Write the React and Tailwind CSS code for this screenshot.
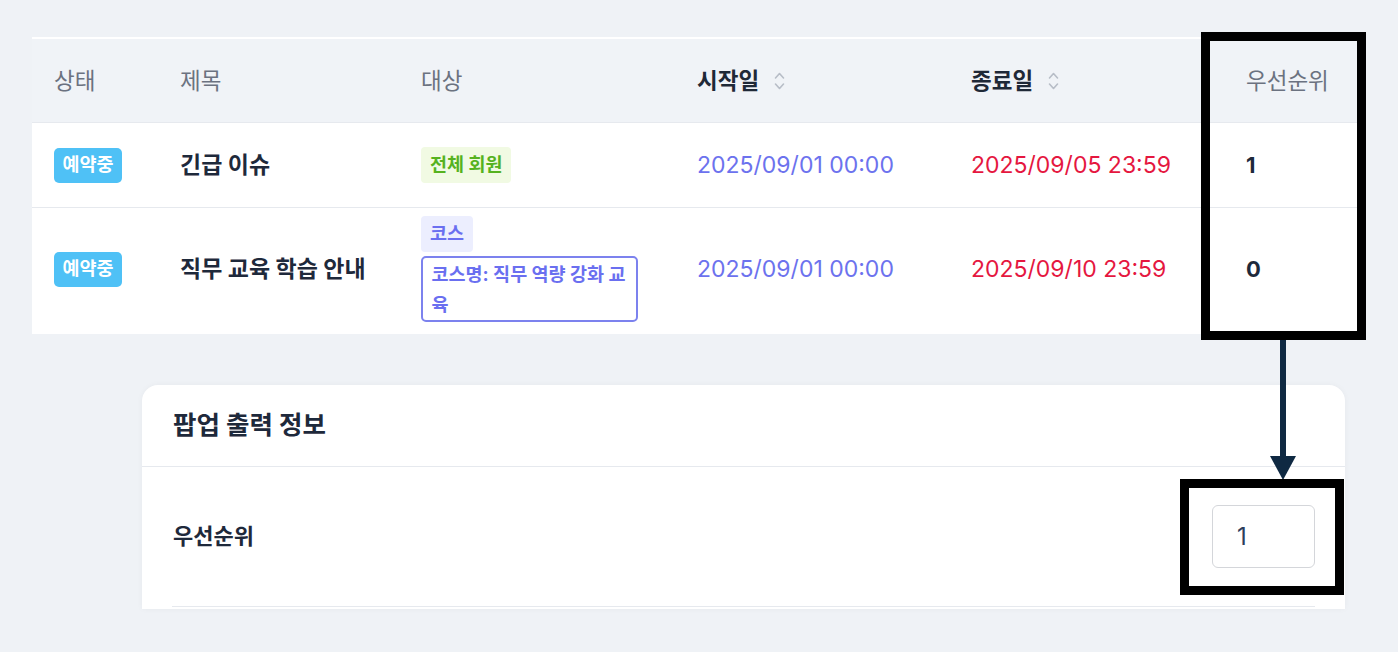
const FONT = { fontFamily: 'Inter, "Noto Sans CJK KR", "Noto Sans", sans-serif' };

function SortIcon() {
  return (
    <svg width="13" height="24" viewBox="0 0 13 24" className="ml-[14px]">
      <path d="M2.5 9 L6.5 4.5 L10.5 9" fill="none" stroke="#b7bdc7" strokeWidth="1.6" strokeLinecap="round" strokeLinejoin="round" />
      <path d="M2.5 15 L6.5 19.5 L10.5 15" fill="none" stroke="#b7bdc7" strokeWidth="1.6" strokeLinecap="round" strokeLinejoin="round" />
    </svg>
  );
}

function Badge() {
  return (
    <span className="inline-flex h-[35px] w-[68px] items-center justify-center rounded-[5px] bg-[#4fc1f6] text-[18.5px] font-bold text-white">
      예약중
    </span>
  );
}

const cols = "grid grid-cols-[126px_241px_276px_274px_275px_1fr] pl-[22px]";

export default function App() {
  return (
    <div style={FONT} className="relative h-[652px] w-[1398px] overflow-hidden bg-[#eff2f6]">
      <div className="ml-[32px] w-[1325px] pt-[37px]">
        {/* table header */}
        <div className={`${cols} h-[85px] items-center border-t-2 border-white bg-[#f0f3f7] text-[22.5px]`}>
          <div className="text-[#6b7280]">상태</div>
          <div className="text-[#6b7280]">제목</div>
          <div className="text-[#6b7280]">대상</div>
          <div className="flex items-center font-bold text-[#1f2937]">
            시작일
            <SortIcon />
          </div>
          <div className="flex items-center font-bold text-[#1f2937]">
            종료일
            <SortIcon />
          </div>
          <div className="text-[#6b7280]">우선순위</div>
        </div>

        {/* row 1 */}
        <div className={`${cols} h-[85px] items-center border-t border-[#e6e9ee] bg-white`}>
          <div>
            <Badge />
          </div>
          <div className="text-[23px] font-bold text-[#1e293b]">긴급 이슈</div>
          <div>
            <span className="inline-flex h-[36px] items-center rounded-[4px] bg-[#f1fae3] px-[9px] text-[18.5px] font-bold text-[#56b21f]">
              전체 회원
            </span>
          </div>
          <div className="text-[23px] text-[#6c72ee]">2025/09/01 00:00</div>
          <div className="text-[23px] text-[#e5173f]">2025/09/05 23:59</div>
          <div className="text-[22px] font-bold text-[#1e293b]">1</div>
        </div>

        {/* row 2 */}
        <div className={`${cols} h-[127px] items-center border-t border-[#e6e9ee] bg-white pt-[7px] pb-[11px]`}>
          <div>
            <Badge />
          </div>
          <div className="text-[23px] font-bold text-[#1e293b]">직무 교육 학습 안내</div>
          <div className="flex flex-col items-start gap-[4px]">
            <span className="inline-flex h-[36px] items-center rounded-[4px] bg-[#eceefe] px-[9px] text-[18.5px] font-bold text-[#6a6ff0]">
              코스
            </span>
            <div className="w-[217px] rounded-[5px] border-2 border-solid border-[#7c82ee] py-[1px] pr-[6px] pl-[8.5px] text-[18.5px] leading-[30px] font-bold text-[#6a6ff0]">
              코스명: 직무 역량 강화 교육
            </div>
          </div>
          <div className="text-[23px] text-[#6c72ee]">2025/09/01 00:00</div>
          <div className="text-[23px] text-[#e5173f]">2025/09/10 23:59</div>
          <div className="text-[22px] font-bold text-[#1e293b]">0</div>
        </div>
      </div>

      {/* popup info card */}
      <div className="mt-[51px] ml-[142px] w-[1203px] rounded-t-[16px] bg-white pb-[2px] shadow-[0_0_6px_rgba(15,23,42,0.04)]">
        <div className="flex h-[82px] items-center border-b border-[#e6e9ee] px-[31px] text-[25.5px] font-bold text-[#1e293b]">
          팝업 출력 정보
        </div>
        <div className="px-[30px]">
          <div className="flex h-[140px] items-center justify-between border-b border-[#e6e9ee]">
            <div className="pl-[1px] text-[22px] font-bold text-[#1e293b]">우선순위</div>
            <div className="flex h-[63px] w-[103px] items-center rounded-[6px] border border-[#d4d6da] pl-[24px] text-[24px] text-[#2d3e5c]">
              1
            </div>
          </div>
        </div>
      </div>

      {/* annotations */}
      <div className="absolute top-[32px] left-[1201px] h-[308px] w-[165px] border-[9px] border-black" />
      <div className="absolute top-[340px] left-[1280px] h-[120px] w-[6px] bg-[#0f2942]" />
      <svg className="absolute top-[456px] left-[1270px]" width="26" height="24" viewBox="0 0 26 24">
        <polygon points="0,0 26,0 13,24" fill="#0f2942" />
      </svg>
      <div className="absolute top-[479px] left-[1180px] h-[116px] w-[164px] border-[9px] border-black" />
    </div>
  );
}
